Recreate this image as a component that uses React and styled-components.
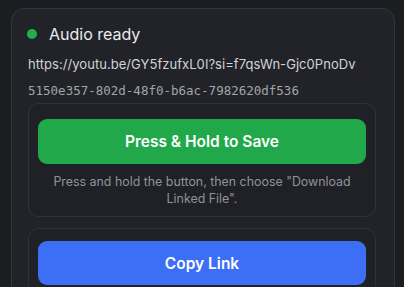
import React from 'react';
import styled, { createGlobalStyle } from 'styled-components';

const GlobalStyle = createGlobalStyle`
  html, body {
    margin: 0;
    padding: 0;
    background: #1b1d21;
    font-family: Inter, 'Noto Sans', sans-serif;
    overflow: hidden;
  }
`;

const Page = styled.div`
  padding: 8px 9px 0 11px;
  height: 287px;
  box-sizing: border-box;
  overflow: hidden;
`;

const Card = styled.div`
  background: #212328;
  border: 1px solid #34363c;
  border-radius: 13px;
  padding: 15px 18px 0 16px;
  height: 320px;
  box-sizing: border-box;
`;

const Status = styled.div`
  display: flex;
  align-items: center;
  gap: 12px;
  height: 20px;
`;

const Dot = styled.span`
  width: 10px;
  height: 10px;
  border-radius: 50%;
  background: ${(p) => p.color};
  margin-left: -1px;
`;

const StatusText = styled.span`
  color: #ececee;
  font-size: 16px;
  font-weight: 400;
`;

const Url = styled.div`
  margin-top: 11px;
  color: #d2d3d6;
  font-size: 13px;
  line-height: 18px;
  letter-spacing: 0.05px;
`;

const Uuid = styled.div`
  margin-top: 9px;
  color: #a3a5a9;
  font-family: 'DejaVu Sans Mono', 'Liberation Mono', monospace;
  font-size: 12.5px;
  line-height: 18px;
`;

const Section = styled.div`
  margin-top: ${(p) => p.top}px;
  border: 1px solid #303237;
  border-radius: 11px;
  background: #1f2126;
  padding: ${(p) => p.pad};
`;

const ActionButton = styled.button`
  display: block;
  width: 100%;
  height: ${(p) => p.h}px;
  border: none;
  border-radius: 9px;
  background: ${(p) => p.bg};
  color: #ffffff;
  font-family: Inter, 'Noto Sans', sans-serif;
  font-size: 15.5px;
  font-weight: 600;
  cursor: pointer;
`;

const Hint = styled.p`
  margin: 9px 8px 0;
  text-align: center;
  color: #90939a;
  font-size: 12.4px;
  line-height: 17px;
`;

export default function App() {
  return (
    <>
      <GlobalStyle />
      <Page>
        <Card>
          <Status>
            <Dot color="#21b04b" />
            <StatusText>Audio ready</StatusText>
          </Status>
          <Url>https://youtu.be/GY5fzufxL0I?si=f7qsWn-Gjc0PnoDv</Url>
          <Uuid>5150e357-802d-48f0-b6ac-7982620df536</Uuid>
          <Section top={3} pad="15px 9px 9px">
            <ActionButton bg="#20a84a" h={45}>
              Press &amp; Hold to Save
            </ActionButton>
            <Hint>
              Press and hold the button, then choose "Download Linked File".
            </Hint>
          </Section>
          <Section top={11} pad="12px 9px 9px">
            <ActionButton bg="#3d6ef6" h={44}>
              Copy Link
            </ActionButton>
          </Section>
        </Card>
      </Page>
    </>
  );
}
